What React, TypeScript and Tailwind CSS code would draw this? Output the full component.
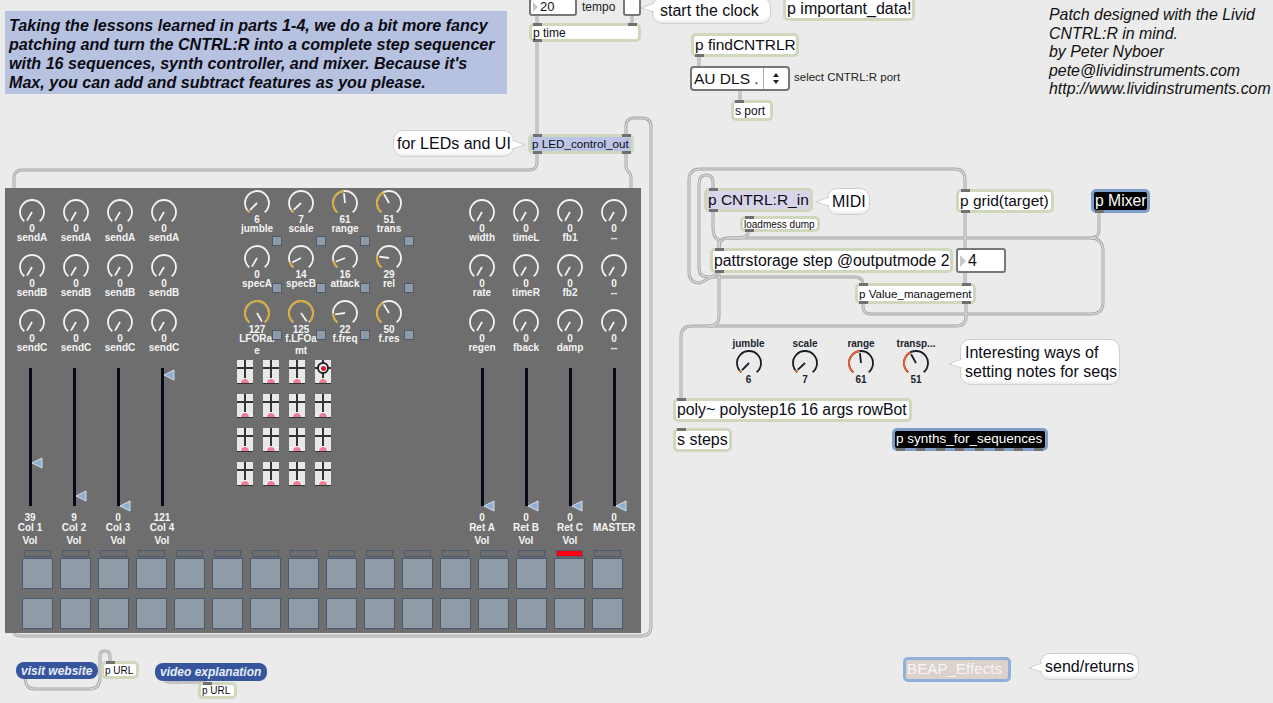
import React from "react";

const SANS = "font-['Liberation_Sans',Arial,sans-serif]";

// value -> clock angle in degrees, 0 is straight up
const polar = (cx: number, cy: number, r: number, deg: number) => {
  const a = ((deg - 90) * Math.PI) / 180;
  return [cx + r * Math.cos(a), cy + r * Math.sin(a)];
};

const arc = (cx: number, cy: number, r: number, from: number, to: number) => {
  const [x1, y1] = polar(cx, cy, r, from);
  const [x2, y2] = polar(cx, cy, r, to);
  return `M${x1} ${y1}A${r} ${r} 0 ${to - from > 180 ? 1 : 0} 1 ${x2} ${y2}`;
};

function Dial({ value, dark }: { value: number; dark?: boolean }) {
  const base = dark ? "#161b26" : "#f2f2f2";
  const active = dark ? "#f0602a" : "#d8a92f";
  const end = -140 + (value / 127) * 280;
  const [px, py] = polar(14, 14, 10, -150 + (value / 127) * 300);
  return (
    <svg width="28" height="28" viewBox="0 0 28 28" className="block shrink-0">
      <path d={arc(14, 14, 12, -140, 140)} fill="none" stroke={base} strokeWidth="1.8" />
      {value > 0 && <path d={arc(14, 14, 12, -140, end)} fill="none" stroke={active} strokeWidth="1.8" />}
      <line x1="14" y1="14" x2={px} y2={py} stroke={base} strokeWidth="1.8" />
    </svg>
  );
}

function Knob({ value, label, more, tight }: { value: number; label: string; more?: string; tight?: boolean }) {
  return (
    <div className={`flex h-[55px] w-[44px] flex-col items-center text-[10px] font-bold text-[#f4f4f4] ${SANS}`}>
      <Dial value={value} />
      <span className={`leading-[8px] ${tight ? "-mt-[1.5px]" : "-mt-px"}`}>{value}</span>
      <span className="whitespace-nowrap leading-[9px]">{label}</span>
      {more && <span className="mt-[3px] whitespace-nowrap leading-[9px]">{more}</span>}
    </div>
  );
}

const sends = ["A", "B", "C"].flatMap((r) => [0, 1, 2, 3].map(() => ({ label: "send" + r, value: 0 })));
const rets = ["width", "timeL", "fb1", "--", "rate", "timeR", "fb2", "--", "regen", "fback", "damp", "--"];
const synth = [
  { label: "jumble", value: 6 },
  { label: "scale", value: 7 },
  { label: "range", value: 61 },
  { label: "trans", value: 51 },
  { label: "specA", value: 0 },
  { label: "specB", value: 14 },
  { label: "attack", value: 16 },
  { label: "rel", value: 29 },
  { label: "LFORa.", more: "e", value: 127 },
  { label: "f.LFOa", more: "mt", value: 125 },
  { label: "f.freq", value: 22 },
  { label: "f.res", value: 50 },
];

function Fader({ value, name, pos }: { value: number; name: string; pos: number }) {
  return (
    <div className={`flex w-[44px] flex-col items-center text-[10px] font-bold text-[#f4f4f4] ${SANS}`}>
      <div className="relative h-[138px] w-[3px] bg-[#070b18]">
        <svg width="14" height="12" viewBox="0 0 14 12" className="absolute left-[2px]" style={{ top: pos - 6 }}>
          <path d="M1 6L11 1V11Z" fill="#8fb0d6" stroke="#d8dde3" strokeWidth="1" />
        </svg>
      </div>
      <span className="mt-[7px] leading-[10px]">{value}</span>
      <span className="mt-px whitespace-nowrap leading-[8px]">{name}</span>
      {name !== "MASTER" && <span className="mt-[3px] leading-[12px]">Vol</span>}
    </div>
  );
}

function Cell({ on }: { on?: boolean }) {
  return (
    <div className="relative h-[24px] w-[16px] overflow-hidden border-b border-[#333] bg-[#e8e8e8]">
      <div className="absolute bottom-0 left-[7px] top-0 w-[2px] bg-[#333]" />
      <div className="absolute left-0 right-0 top-[7px] h-[2px] bg-[#333]" />
      <div className="absolute -bottom-[4px] left-[4px] h-[8px] w-[8px] rounded-full bg-[#ec7f97] ring-1 ring-white" />
      {on && (
        <div className="absolute left-[2px] top-[2px] flex h-[12px] w-[12px] items-center justify-center rounded-full border-2 border-[#222] bg-white">
          <div className="h-[5px] w-[5px] rounded-full bg-[#e01030]" />
        </div>
      )}
    </div>
  );
}

// tops of the little blue toggles, they step by 47 while the dials step by 55
const toggleTop = [47, 39, 31];

function Panel() {
  return (
    <div className="absolute left-[5px] top-[188px] flex h-[445px] w-[636px] flex-col bg-[#6e6e6e]">
      <div className="flex h-[362px]">
        <div className="ml-[5px] mt-[10px] grid h-fit w-[176px] grid-cols-4">
          {sends.map((k, i) => (
            <Knob key={i} {...k} />
          ))}
        </div>
        <div className="ml-[49px] flex flex-col">
          <div className="relative mt-px grid w-[176px] grid-cols-4">
            {synth.map((k, i) => (
              <div key={i} className="relative h-[55px]">
                <Knob {...k} tight />
                <div
                  className="absolute left-[37px] h-[10px] w-[10px] border border-[#4b5a70] bg-[#8f9ba6]"
                  style={{ top: toggleTop[Math.floor(i / 4)] }}
                />
              </div>
            ))}
          </div>
          <div className="ml-[2px] mt-[6px] grid grid-cols-[repeat(4,16px)] gap-x-[10px] gap-y-[10px]">
            {Array.from({ length: 16 }).map((_, i) => (
              <Cell key={i} on={i === 3} />
            ))}
          </div>
        </div>
        <div className="ml-[49px] mt-[10px] grid h-fit w-[176px] grid-cols-4">
          {rets.map((label, i) => (
            <Knob key={i} label={label} value={0} />
          ))}
        </div>
      </div>
      <div className="absolute left-[3px] top-[180px] flex">
        <Fader value={39} name="Col 1" pos={95} />
        <Fader value={9} name="Col 2" pos={128} />
        <Fader value={0} name="Col 3" pos={138} />
        <Fader value={121} name="Col 4" pos={7} />
        <div className="w-[276px]" />
        <Fader value={0} name="Ret A" pos={138} />
        <Fader value={0} name="Ret B" pos={138} />
        <Fader value={0} name="Ret C" pos={138} />
        <Fader value={0} name="MASTER" pos={138} />
      </div>
      <div className="ml-[17px] grid w-[601px] grid-cols-[repeat(16,31px)] gap-x-[7px]">
        {Array.from({ length: 16 }).map((_, i) => (
          <div key={i} className={`mx-[2px] h-[7px] border border-[#4b5a70] ${i === 14 ? "bg-[#ff0010]" : "bg-[#6e6e6e]"}`} />
        ))}
      </div>
      <div className="ml-[17px] mt-px grid w-[601px] grid-cols-[repeat(16,31px)] gap-x-[7px] gap-y-[9px]">
        {Array.from({ length: 32 }).map((_, i) => (
          <div key={i} className="h-[31px] border border-[#4b5a70] bg-[#8f9ba6]" />
        ))}
      </div>
    </div>
  );
}

type BoxProps = {
  x: number;
  y: number;
  w: number;
  h: number;
  text: string;
  size?: number;
  fill?: string;
  ports?: number[];
  outs?: number[];
};

// a Max patcher object on the canvas; ports are inlet/outlet x offsets from its outer edge
function Box({ x, y, w, h, text, size = 15.5, fill = "bg-white", ports = [], outs = [] }: BoxProps) {
  return (
    <div
      className={`absolute flex items-center whitespace-nowrap rounded-[5px] border-[3px] border-[#cfd8bd] pl-[1px] text-[#0c0c14] ${fill} ${SANS}`}
      style={{ left: x, top: y, width: w, height: h, fontSize: size }}
    >
      {ports.map((p) => (
        <i key={p} className="absolute -top-[3px] h-[3px] w-[9px] bg-[#707070]" style={{ left: p - 3 }} />
      ))}
      {outs.map((p) => (
        <i key={p} className="absolute -bottom-[3px] h-[3px] w-[9px] bg-[#707070]" style={{ left: p - 3 }} />
      ))}
      <span className="relative">{text}</span>
    </div>
  );
}

function BlackBox({ x, y, w, h, text, size = 15.7, outs = [] }: BoxProps) {
  return (
    <div
      className={`absolute flex items-center whitespace-nowrap rounded-[5px] border-[3px] border-[#7f9fcb] bg-black pl-px text-white ${SANS}`}
      style={{ left: x, top: y, width: w, height: h, fontSize: size }}
    >
      {text}
      {outs.map((p) => (
        <i key={p} className="absolute -bottom-[3px] h-[3px] w-[9px] bg-[#707070]" style={{ left: p - 3 }} />
      ))}
    </div>
  );
}

function Bubble({ x, y, w, h, tail, right, children }: { x: number; y: number; w: number; h: number; tail: number; right?: boolean; children: React.ReactNode }) {
  return (
    <div
      className={`absolute flex items-center whitespace-nowrap rounded-[10px] border border-[#cfcfcf] bg-white px-[3px] text-[16px] leading-[19px] text-[#0c0c14] shadow-[inset_0_-4px_4px_-3px_#dedede] ${SANS}`}
      style={{ left: x, top: y, width: w, height: h }}
    >
      <svg width="14" height="12" viewBox="0 0 14 12" className={`absolute ${right ? "-right-[13px]" : "-left-[13px]"}`} style={{ top: tail - 6 }}>
        <path d={right ? "M0 1L13 6L0 10" : "M14 1L1 6L14 10"} fill="white" stroke="#cfcfcf" />
      </svg>
      {children}
    </div>
  );
}

const WIRES = [
  "M537 16V135",
  "M632 16V24",
  "M537 154V162Q537 170 529 170H22Q14 170 14 178V190",
  "M626 154V166Q626 170 629 172Q631 174 631 178V190",
  "M626 134V126Q626 118 634 118H642Q651 118 651 127V626Q651 636 641 636H22Q14 636 14 632",
  "M699 57V66",
  "M740 91V100",
  "M110 661V656Q110 651 105 651H104Q100 651 100 656V678Q100 689 89 689H34Q26 689 25 679",
  "M165 681Q170 683 180 682H207",
  "M719 273Q700 283 700 283Q689 283 689 272V180Q689 169 700 169H955Q965 169 965 180V190",
  "M719 277H708Q699 277 699 268V184Q699 175 706 175Q713 175 713 182V190",
  "M713 212V228Q713 238 719 240V250",
  "M749 232Q746 238 738 238H728Q719 238 719 248",
  "M1099 213V230Q1099 238 1090 238H728",
  "M1090 238Q1103 238 1103 251V302Q1103 314 1091 314H871Q863 314 863 306V304",
  "M965 212V284",
  "M719 277H854Q863 277 863 284",
  "M966 304V316Q966 326 956 326H692Q681 326 681 337V400",
  "M719 273V316Q719 326 709 326",
];

function Wires() {
  return (
    <svg width="1273" height="703" className="absolute left-0 top-0" fill="none">
      {WIRES.map((d, i) => (
        <path key={i} d={d} stroke="#a6a6a6" strokeWidth="3" />
      ))}
      {WIRES.map((d, i) => (
        <path key={i} d={d} stroke="#dcdcdc" strokeWidth="1.2" />
      ))}
    </svg>
  );
}

export default function App() {
  return (
    <div className={`relative h-[703px] w-[1273px] overflow-hidden bg-[#ebebeb] ${SANS}`}>
      <Wires />

      <div className="absolute left-[5px] top-[11px] h-[83px] w-[502px] bg-[#b7c1e0] px-[4px] pt-[5px] text-[16.1px] font-bold italic leading-[19px] text-[#0c0c14]">
        Taking the lessons learned in parts 1-4, we do a bit more fancy
        <br />
        patching and turn the CNTRL:R into a complete step sequencer
        <br />
        with 16 sequences, synth controller, and mixer. Because it's
        <br />
        Max, you can add and subtract features as you please.
      </div>

      <div className="absolute left-[1049px] top-[6px] whitespace-nowrap text-[15.9px] italic leading-[18.5px] text-[#111]">
        Patch designed with the Livid
        <br />
        CNTRL:R in mind.
        <br />
        by Peter Nyboer
        <br />
        pete@lividinstruments.com
        <br />
        http://www.lividinstruments.com
      </div>

      {/* transport */}
      <div className="absolute left-[529px] -top-[2px] flex h-[18px] w-[48px] items-center rounded-[3px] border-2 border-[#777] bg-white pl-[2px] text-[13px] text-[#111]">
        <span className="mr-[2px] h-0 w-0 border-y-[5px] border-l-[5px] border-y-transparent border-l-[#c8c8c8]" />
        20
      </div>
      <span className="absolute left-[582px] top-0 text-[12px] leading-[14px] text-[#222]">tempo</span>
      <div className="absolute left-[623px] -top-[8px] h-[24px] w-[18px] rounded-[3px] border-2 border-[#777] bg-white" />
      <Box x={529} y={23} w={112} h={19} text="p time" size={12} ports={[4, 99]} outs={[4]} />
      <Bubble x={652} y={-3} w={119} h={27} tail={10}>
        <span className="pl-[4px]">start the clock</span>
      </Bubble>
      <Box x={783} y={-4} w={132} h={25} text="p important_data!" size={16} />

      <Box x={691} y={33} w={108} h={24} text="p findCNTRLR" outs={[4]} />
      <div className="absolute left-[690px] top-[66px] flex h-[25px] w-[100px] items-center rounded-[4px] border-2 border-[#777] bg-white text-[15.5px] text-[#111]">
        <span className="w-[71px] whitespace-nowrap pl-[2px]">AU DLS .</span>
        <div className="flex h-full flex-1 flex-col items-center justify-center gap-[3px] border-l border-[#aaa]">
          <i className="h-0 w-0 border-x-[3px] border-b-[4px] border-x-transparent border-b-[#222]" />
          <i className="h-0 w-0 border-x-[3px] border-t-[4px] border-x-transparent border-t-[#222]" />
        </div>
      </div>
      <span className="absolute left-[794px] top-[70px] text-[11.5px] leading-[14px] text-[#222]">select CNTRL:R port</span>
      <Box x={731} y={100} w={42} h={21} text="s port" size={12} ports={[4]} />

      <Bubble x={393} y={130} w={121} h={27} tail={14} right>
        for LEDs and UI
      </Bubble>
      <Box x={528} y={134} w={106} h={20} text="p LED_control_out" size={11.7} fill="bg-[#bcc5e6]" ports={[5, 94]} outs={[5, 94]} />

      <Panel />

      {/* patching on the right */}
      <Box x={704} y={188} w={109} h={24} text="p CNTRL:R_in" fill="bg-[#d8d4ea]" ports={[5]} outs={[5]} />
      <Bubble x={827} y={188} w={43} h={27} tail={13}>
        <span className="pl-px">MIDI</span>
      </Bubble>
      <Box x={740} y={216} w={80} h={16} text="loadmess dump" size={10} ports={[5]} outs={[5]} />
      <Box x={956} y={189} w={98} h={24} text="p grid(target)" ports={[5]} outs={[5]} />
      <BlackBox x={1091} y={189} w={59} h={24} text="p Mixer" outs={[4]} />
      <Box x={710} y={248} w={243} h={25} text="pattrstorage step @outputmode 2" size={15.8} ports={[5]} outs={[5]} />
      <div className="absolute left-[956px] top-[248px] flex h-[25px] w-[50px] items-center rounded-[3px] border-2 border-[#777] bg-white pl-[2px] text-[16px] text-[#111]">
        <span className="mr-[2px] h-0 w-0 border-y-[6px] border-l-[6px] border-y-transparent border-l-[#c8c8c8]" />
        4
      </div>
      <Box x={855} y={283} w={121} h={21} text="p Value_management" size={11.6} ports={[4, 107]} outs={[4, 107]} />

      {/* duplicate of the sequence controls */}
      <div className="absolute left-[720px] top-[338px] flex text-[10px] font-bold text-[#20242e]">
        {[
          { label: "jumble", value: 6, w: "w-[57px]" },
          { label: "scale", value: 7, w: "w-[56px]" },
          { label: "range", value: 61, w: "w-[56px]" },
          { label: "transp...", value: 51, w: "w-[54px]" },
        ].map((k) => (
          <div key={k.label} className={`flex flex-col items-center ${k.w}`}>
            <span className="leading-[11px]">{k.label}</span>
            <Dial value={k.value} dark />
            <span className="-mt-[2px] leading-[10px]">{k.value}</span>
          </div>
        ))}
      </div>
      <Bubble x={960} y={339} w={160} h={46} tail={24}>
        <span className="pl-px">
          Interesting ways of
          <br />
          setting notes for seqs
        </span>
      </Bubble>

      <Box x={673} y={398} w={239} h={24} text="poly~ polystep16 16 args rowBot" size={15.8} ports={[4]} />
      <Box x={673} y={428} w={59} h={24} text="s steps" size={16} ports={[4]} />
      <BlackBox x={892} y={428} w={156} h={23} text="p synths_for_sequences" size={13.5} outs={[4, 24, 44, 63, 83, 103, 122, 142]} />

      {/* links */}
      <div className="absolute left-[16px] top-[662px] flex h-[17px] w-[82px] items-center rounded-[8px] bg-[#36559c] pl-[5px] text-[12px] font-bold italic text-[#e8edf6]">visit website</div>
      <Box x={101} y={661} w={38} h={18} text="p URL" size={10} ports={[5]} />
      <div className="absolute left-[155px] top-[663px] flex h-[18px] w-[112px] items-center rounded-[8px] bg-[#36559c] pl-[5px] text-[12px] font-bold italic text-[#e8edf6]">video explanation</div>
      <Box x={198} y={682} w={39} h={17} text="p URL" size={10} ports={[5]} />

      <div className="absolute left-[903px] top-[657px] flex h-[25px] w-[108px] items-center rounded-[5px] border-[3px] border-[#8fb0db] bg-[#dcd2cc] pl-px text-[15.2px] text-[#f6f6f6]">BEAP_Effects</div>
      <Bubble x={1040} y={653} w={99} h={27} tail={14}>
        <span className="pl-px">send/returns</span>
      </Bubble>
    </div>
  );
}
